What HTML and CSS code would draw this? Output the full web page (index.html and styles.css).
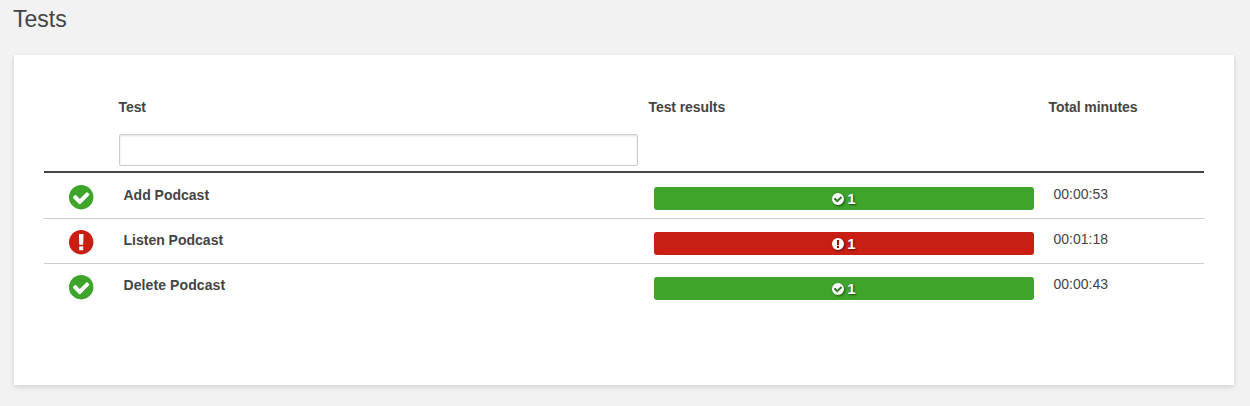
FILE: index.html
```html
<!DOCTYPE html>
<html lang="en">
<head>
<meta charset="utf-8">
<title>Tests</title>
<link rel="stylesheet" href="styles.css">
</head>
<body>
<svg class="defs" width="0" height="0" aria-hidden="true">
  <symbol id="check" viewBox="0 0 1536 1536" overflow="visible"><path fill-rule="evenodd" d="M1284 606q0-28-18-46l-91-90q-19-19-45-19t-45 19l-408 407-226-226q-19-19-45-19t-45 19l-91 90q-18 18-18 46 0 27 18 45l362 362q19 19 45 19 27 0 46-19l543-543q18-18 18-45zM1536 768A768 768 0 1 1 0 768A768 768 0 1 1 1536 768z"/></symbol>
  <symbol id="alert" viewBox="0 0 1536 1536" overflow="visible"><path fill-rule="evenodd" d="M768 0A768 768 0 1 1 768 1536A768 768 0 1 1 768 0zM896 1247v-190q0-14-9-23.500t-22-9.500h-192q-13 0-23 10t-10 23v190q0 13 10 23t23 10h192q13 0 22-9.500t9-23.500zm-2-344l18-621q0-12-10-18-10-8-24-8h-220q-14 0-24 8-10 6-10 18l17 621q0 10 10 17.500t24 7.500h185q14 0 23.500-7.500t10.500-17.500z"/></symbol>
</svg>
<h1 class="title">Tests</h1>
<main class="card">
  <div class="head">
    <div></div>
    <div class="head-cell"><span class="label">Test</span><input class="filter" type="text" aria-label="Filter tests"></div>
    <div class="head-cell"><span class="label">Test results</span></div>
    <div class="head-cell"><span class="label">Total minutes</span></div>
  </div>
  <div class="row passed">
    <svg class="status"><use href="#check"/></svg>
    <div class="name">Add Podcast</div>
    <div class="bar"><svg class="bar-icon"><use href="#check"/></svg><span>1</span></div>
    <div class="time">00:00:53</div>
  </div>
  <div class="row failed">
    <svg class="status"><use href="#alert"/></svg>
    <div class="name">Listen Podcast</div>
    <div class="bar"><svg class="bar-icon"><use href="#alert"/></svg><span>1</span></div>
    <div class="time">00:01:18</div>
  </div>
  <div class="row passed">
    <svg class="status"><use href="#check"/></svg>
    <div class="name name-wide">Delete Podcast</div>
    <div class="bar"><svg class="bar-icon"><use href="#check"/></svg><span>1</span></div>
    <div class="time">00:00:43</div>
  </div>
</main>
</body>
</html>
```
FILE: styles.css
```css
* { box-sizing: border-box; }
body {
  margin: 0;
  height: 406px;
  padding: 5px 16px 0 14px;
  overflow: hidden;
  background: #f2f2f2;
  color: #444;
  font: 14px/20px "Liberation Sans", Arial, sans-serif;
}
.defs { display: none; }
.title {
  margin: 0 0 22px -1px;
  font-size: 23px;
  line-height: 28px;
  font-weight: 400;
  letter-spacing: 0;
}
.card {
  height: 330px;
  padding: 42px 30px 0;
  background: #fff;
  box-shadow: 0 2px 5px rgba(0, 0, 0, 0.14);
}
.head, .row {
  display: grid;
  grid-template-columns: 75px 530px 400px 155px;
}
.head {
  height: 76px;
  border-bottom: 2px solid #444;
}
.head-cell {
  display: flex;
  flex-direction: column;
  gap: 17px;
}
.label, .name { font-weight: 700; }
.label { margin-left: -0.5px; letter-spacing: -0.08px; }
.filter {
  width: 519px;
  height: 32px;
  padding: 4px 8px;
  border: 1px solid #ccc;
  border-radius: 2px;
  background: #fff;
  box-shadow: inset 0 1px 2px rgba(0, 0, 0, 0.12);
}
.row { height: 45px; }
.row + .row { box-shadow: inset 0 1px #ccc; }
.status {
  width: 24.4px;
  height: 24.4px;
  margin: 11.7px 0 0 25.3px;
  fill: currentColor;
  overflow: visible;
}
.passed .status { color: #3fa42a; }
.failed .status { color: #c91e14; }
.name { padding: 12px 0 0 4.5px; }
.name-wide { letter-spacing: 0.1px; }
.bar {
  display: flex;
  align-items: center;
  justify-content: center;
  gap: 3px;
  width: 380px;
  height: 23px;
  margin: 14px 0 0 5px;
  border-radius: 3px;
  color: #fff;
  font-size: 15px;
  font-weight: 700;
  text-shadow: 1px 1px 2px rgba(0, 0, 0, 0.6);
}
.passed .bar { background: #3fa42a; }
.failed .bar { background: #c91e14; }
.bar-icon {
  width: 12px;
  height: 12px;
  fill: #fff;
  overflow: visible;
  filter: drop-shadow(1px 1px 1px rgba(0, 0, 0, 0.5));
}
.time { padding: 11px 0 0 4.5px; }
```
